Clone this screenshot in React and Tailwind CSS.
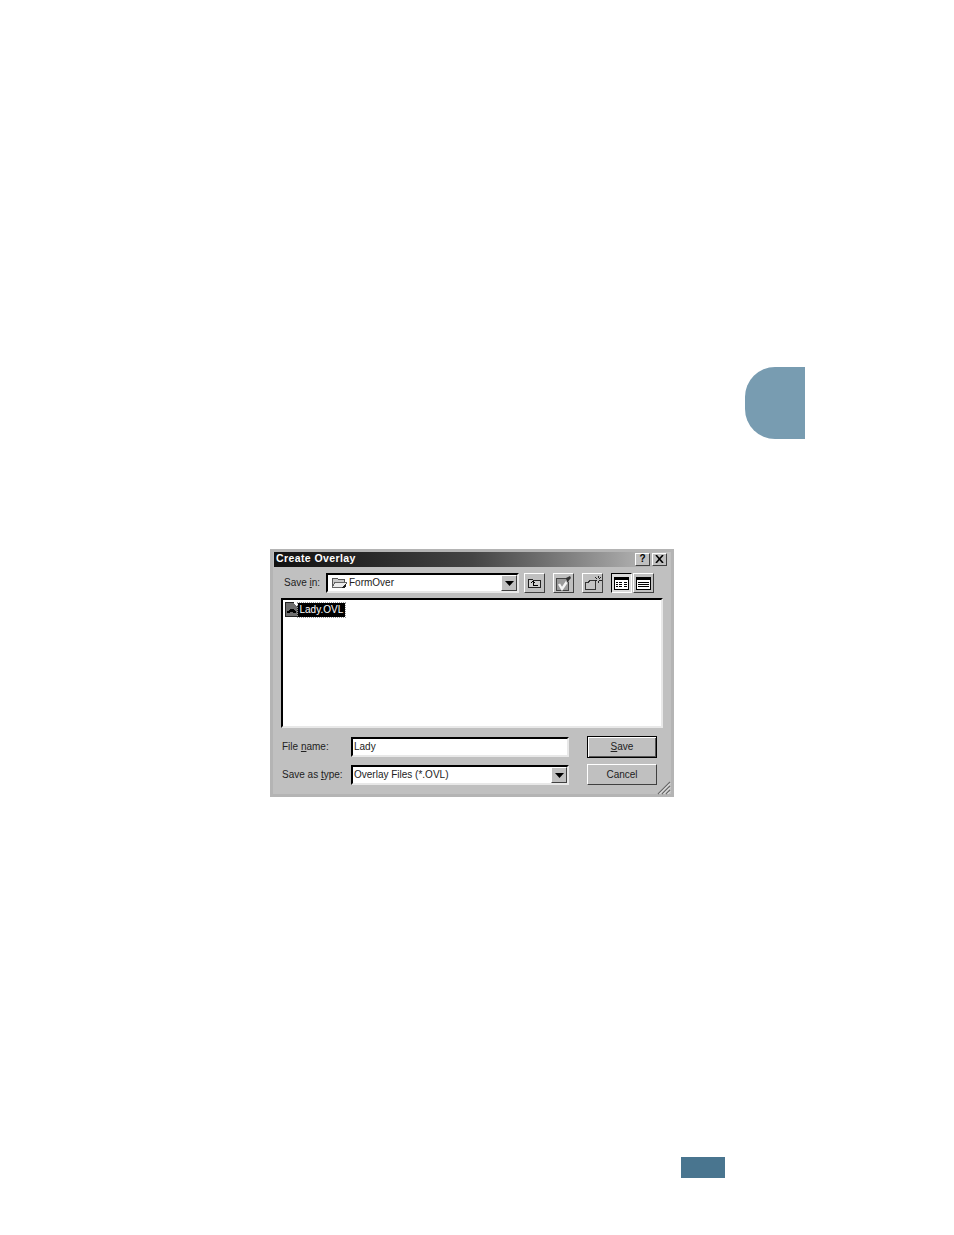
const raised = 'border border-t-white border-l-white border-r-[#404040] border-b-[#404040] bg-[#c0c0c0]';
const sunken = 'border-2 border-t-[#000] border-l-[#000] border-r-[#e8e8e8] border-b-[#e8e8e8] bg-white';

const FolderIcon = () => (
  <svg width="16" height="14" viewBox="0 0 16 14" shapeRendering="crispEdges">
    <path d="M1.500 2.500h5l1 1h6v8h-12z" fill="#c8c8c8" stroke="#555" />
    <path d="M1.500 11.500l2-5h12l-2 5z" fill="#ececec" stroke="#666" />
    <path d="M10 12l5-5v3l-2 2z" fill="#222" />
  </svg>
);

const DropArrow = () => (
  <div className={`w-[16px] h-[16px] flex items-center justify-center ${raised}`}>
    <svg width="9" height="5" viewBox="0 0 9 5"><path d="M0 0h9L4.500 5z" fill="#000" /></svg>
  </div>
);

const ToolButton = ({ pressed, children, className = '' }) => (
  <div className={`w-[21px] h-[20px] flex items-center justify-center ${pressed ? 'border border-t-black border-l-black border-r-white border-b-white bg-[#dcdcdc]' : raised} ${className}`}>
    {children}
  </div>
);

const UpIcon = () => (
  <svg width="15" height="12" viewBox="0 0 15 12" shapeRendering="crispEdges">
    <path d="M1.500 2.500h4l1 1h7v7h-12z" fill="#d0d0d0" stroke="#222" />
    <path d="M6 5v3h5M4 6l2-2 2 2" fill="none" stroke="#000" />
  </svg>
);

const FavIcon = () => (
  <svg width="17" height="17" viewBox="0 0 17 17">
    <rect x="1.500" y="3.500" width="12" height="12" fill="#9a9a9a" stroke="#444" />
    <path d="M4 9l3 5 4-6 4-6" fill="none" stroke="#f4f4f4" strokeWidth="2.400" />
    <path d="M11 3l4-2 1 2-4 5z" fill="#333" />
  </svg>
);

const NewFolderIcon = () => (
  <svg width="18" height="17" viewBox="0 0 18 17" shapeRendering="crispEdges">
    <path d="M1.500 7.500h3l1-2h6v9h-10z" fill="#c4c4c4" stroke="#333" />
    <path d="M14 1v2M14 6v2M11 2l2 2M17 2l-2 2M11 5h2M15 5h3" stroke="#222" fill="none" />
  </svg>
);

const ListIcon = ({ dense }) => (
  <svg width="15" height="13" viewBox="0 0 15 13" shapeRendering="crispEdges">
    <rect x="0.500" y="0.500" width="14" height="12" fill="#fff" stroke="#000" />
    <path d="M1 2h13" stroke="#000" strokeWidth="2" />
    {dense ? (
      <path d="M2 5.500h2M5 5.500h3M10 5.500h3M2 7.500h2M5 7.500h3M10 7.500h3M2 9.500h2M5 9.500h3M10 9.500h3" stroke="#000" />
    ) : (
      <path d="M2 5.500h11M2 7.500h11M2 9.500h11" stroke="#000" />
    )}
  </svg>
);

const FileIcon = () => (
  <svg width="13" height="15" viewBox="0 0 13 15" shapeRendering="crispEdges">
    <path d="M0.500 0.500h9l3 3v11h-12z" fill="#6e6e6e" stroke="#222" />
    <path d="M9 0l4 4-2 0-2-2z" fill="#fff" />
    <path d="M2 9h2l1-2h4l1 2h1v2H8l-1-1H5l-1 1H2z" fill="#000" />
  </svg>
);

const Grip = () => (
  <svg width="14" height="14" viewBox="0 0 14 14">
    <path d="M13 1L1 13M13 5L5 13M13 9L9 13" stroke="#6a6a6a" strokeWidth="1.200" />
    <path d="M13 2.500L2.500 13M13 6.500L6.500 13M13 10.500L10.500 13" stroke="#fff" strokeWidth="0.800" />
  </svg>
);

const Dialog = () => (
  <div className="w-[404px] h-[248px] flex flex-col bg-[#c0c0c0] border-[3px] border-[#b4b4b4] text-[#222] text-[10px] leading-none font-['Liberation_Sans',sans-serif]">
    {/* title bar */}
    <div className="h-[15px] ml-px mr-[1px] flex items-center justify-between bg-gradient-to-r from-[#111111] via-[#444444] to-[#c4c4c4] pl-[2px] pr-[3px]">
      <span className="text-white font-bold text-[10.500px] tracking-[0.4px] pb-[2px]">Create Overlay</span>
      <div className="flex gap-[2px] mb-[1px]">
        <div className={`w-[15px] h-[13px] flex items-center justify-center text-black font-bold text-[10px] ${raised}`}>?</div>
        <div className={`w-[15px] h-[13px] flex items-center justify-center ${raised}`}>
          <svg width="9" height="8" viewBox="0 0 9 8"><path d="M1 0l7 8M8 0L1 8" stroke="#000" strokeWidth="1.600" /></svg>
        </div>
      </div>
    </div>

    {/* save in row */}
    <div className="h-[20px] mt-[6px] flex items-center">
      <span className="ml-[11px] w-[42px]">Save <span className="underline">i</span>n:</span>
      <div className={`w-[193px] h-[20px] flex items-center justify-between pl-[3px] ${sunken}`}>
        <div className="flex items-center gap-[2px]">
          <FolderIcon />
          <span>FormOver</span>
        </div>
        <DropArrow />
      </div>
      <ToolButton className="ml-[5px]"><UpIcon /></ToolButton>
      <ToolButton className="ml-[8px]"><FavIcon /></ToolButton>
      <ToolButton className="ml-[8px]"><NewFolderIcon /></ToolButton>
      <ToolButton pressed className="ml-[8px]"><ListIcon dense /></ToolButton>
      <ToolButton className="ml-[1px]"><ListIcon /></ToolButton>
    </div>

    {/* file list */}
    <div className={`h-[130px] w-[382px] ml-[8px] mt-[5px] p-[2px] ${sunken}`}>
      <div className="flex items-center">
        <FileIcon />
        <span className="bg-black text-white px-[1.500px] py-[2px] outline-1 outline-dotted outline-[#999]">Lady.OVL</span>
      </div>
    </div>

    {/* bottom form */}
    <div className="flex mt-[8px] relative">
      <div className="flex flex-col gap-[8px] mt-px">
        <div className="flex items-center h-[20px]">
          <span className="ml-[9px] w-[69px]">File <span className="underline">n</span>ame:</span>
          <div className={`w-[218px] h-[20px] flex items-center pl-[1px] ${sunken}`}>Lady</div>
        </div>
        <div className="flex items-center h-[20px]">
          <span className="ml-[9px] w-[69px]">Save as <span className="underline">t</span>ype:</span>
          <div className={`w-[218px] h-[20px] flex items-center justify-between pl-[1px] ${sunken}`}>
            <span>Overlay Files (*.OVL)</span>
            <DropArrow />
          </div>
        </div>
      </div>
      <div className="ml-[18px] flex flex-col gap-[6px]">
        <div className="w-[70px] h-[22px] flex items-center justify-center border border-black bg-[#c0c0c0] shadow-[inset_1px_1px_0_#fff,inset_-1px_-1px_0_#555]">
          <span><span className="underline">S</span>ave</span>
        </div>
        <div className={`w-[70px] h-[21px] flex items-center justify-center ${raised}`}>Cancel</div>
      </div>
    </div>
    <div className="absolute ml-[384px] mt-[229px]"><Grip /></div>
  </div>
);

export default function App() {
  return (
    <div className="w-[954px] h-[1235px] bg-white overflow-hidden flex flex-col">
      <div className="mt-[367px] ml-[745px] w-[60px] h-[72px] rounded-l-[30px] bg-[#789cb1]" />
      <div className="mt-[110px] ml-[270px]">
        <Dialog />
      </div>
      <div className="mt-[360px] ml-[681px] w-[44px] h-[21px] bg-[#49758f]" />
    </div>
  );
}
